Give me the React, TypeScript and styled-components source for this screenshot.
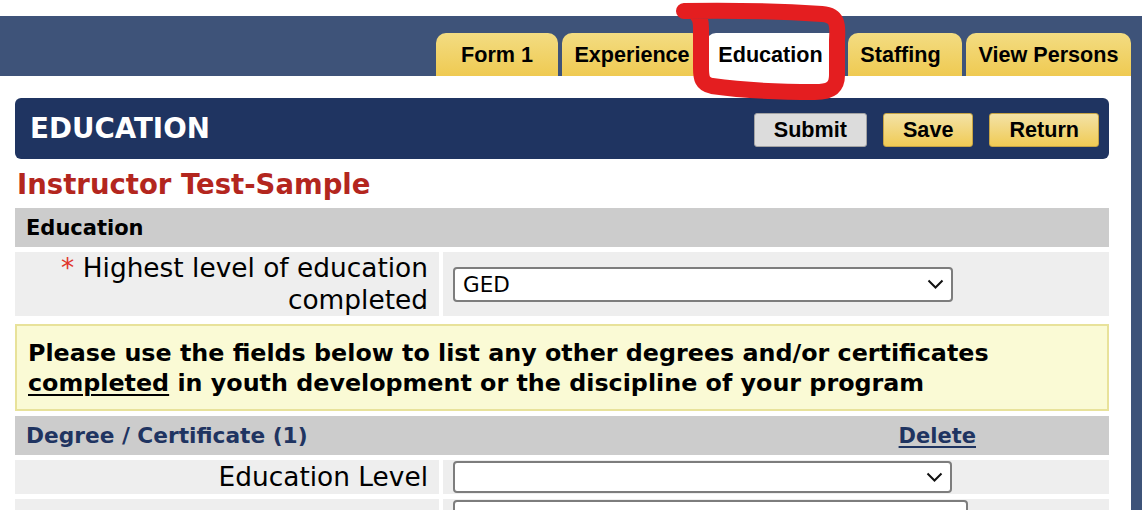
import React from "react";
import styled, { createGlobalStyle } from "styled-components";

const GlobalStyle = createGlobalStyle`
  html, body { margin: 0; padding: 0; background: #ffffff; }
  body {
    width: 1142px;
    height: 510px;
    overflow: hidden;
    font-family: "DejaVu Sans", Verdana, sans-serif;
  }
`;

const Page = styled.div`
  position: relative;
  width: 1142px;
  height: 510px;
  box-sizing: border-box;
  padding-top: 16px;
  display: flex;
  flex-direction: column;
  overflow: hidden;
`;

const TopBar = styled.nav`
  flex-shrink: 0;
  height: 60px;
  background: #3e5379;
  display: flex;
  justify-content: flex-end;
  align-items: flex-end;
  gap: 4px;
  padding-right: 11px;
`;

const Tab = styled.div<{ $w: number; $active?: boolean; $shift?: number }>`
  width: ${(p) => p.$w}px;
  height: 43px;
  box-sizing: border-box;
  padding-right: ${(p) => p.$shift ?? 0}px;
  border-radius: 10px 10px 0 0;
  background: ${(p) =>
    p.$active ? "#ffffff" : "linear-gradient(#f3dc82, #efca52)"};
  display: flex;
  align-items: center;
  justify-content: center;
  font: bold 21.6px "Liberation Sans", Arial, sans-serif;
  color: #000;
  white-space: nowrap;
`;

const Body = styled.div`
  flex: 1;
  min-height: 0;
  display: flex;
`;

const Main = styled.main`
  flex: 1;
  min-width: 0;
  background: #ffffff;
  padding: 22px 22px 0 15px;
  overflow: hidden;
`;

const RightRail = styled.div`
  width: 11px;
  flex-shrink: 0;
  background: #3e5379;
`;

const TitleBar = styled.header`
  height: 61px;
  box-sizing: border-box;
  background: #1f3461;
  border-radius: 6px;
  display: flex;
  align-items: center;
  justify-content: space-between;
  padding: 0 10px 0 15px;
`;

const PageTitle = styled.h1`
  margin: 0;
  color: #ffffff;
  font: bold 27.7px "DejaVu Sans", Verdana, sans-serif;
  line-height: 34px;
`;

const Buttons = styled.div`
  display: flex;
  gap: 16px;
  margin-top: 3px;
`;

const Button = styled.button<{ $gold?: boolean }>`
  height: 34px;
  box-sizing: border-box;
  padding: 0 19px;
  border-radius: 3px;
  border: 1.5px solid ${(p) => (p.$gold ? "#c6a445" : "#a3a3a3")};
  background: ${(p) =>
    p.$gold ? "linear-gradient(#f3e2a6, #f0cb55)" : "#dcdcdc"};
  font: bold 21.6px "Liberation Sans", Arial, sans-serif;
  color: #000;
  cursor: pointer;
`;

const Person = styled.h2`
  margin: 8px 0 7px 2px;
  color: #b3261e;
  font: bold 27.5px "DejaVu Sans", Verdana, sans-serif;
  line-height: 34px;
`;

const FormGrid = styled.div`
  display: grid;
  grid-template-columns: 424px 1fr;
  column-gap: 4px;
  row-gap: 5px;
`;

const SectionHeader = styled.div<{ $h: number; $navy?: boolean }>`
  grid-column: 1 / -1;
  height: ${(p) => p.$h}px;
  box-sizing: border-box;
  background: #cccccc;
  display: flex;
  align-items: center;
  justify-content: space-between;
  padding: 0 133px 0 11px;
  font: bold ${(p) => (p.$navy ? 21.7 : 21)}px "DejaVu Sans", Verdana, sans-serif;
  color: ${(p) => (p.$navy ? "#1f3461" : "#000")};
`;

const DeleteLink = styled.a`
  color: #1f3461;
  font-size: 21px;
  text-decoration: underline;
  text-underline-offset: 3px;
  text-decoration-thickness: 2px;
  cursor: pointer;
`;

const LabelCell = styled.div<{ $h: number }>`
  height: ${(p) => p.$h}px;
  box-sizing: border-box;
  background: #eeeeee;
  display: flex;
  align-items: center;
  justify-content: flex-end;
  text-align: right;
  padding: 0 11px 0 20px;
  font: 26.4px "DejaVu Sans", Verdana, sans-serif;
  line-height: 32px;
  color: #000;
  overflow: hidden;
`;

const Req = styled.span`
  color: #e0352b;
`;

const ValueCell = styled.div<{ $h: number }>`
  height: ${(p) => p.$h}px;
  box-sizing: border-box;
  background: #eeeeee;
  display: flex;
  align-items: center;
  padding-left: 10px;
`;

const SelectWrap = styled.div<{ $w: number; $h: number }>`
  position: relative;
  width: ${(p) => p.$w}px;
  height: ${(p) => p.$h}px;
`;

const Select = styled.select`
  appearance: none;
  -webkit-appearance: none;
  width: 100%;
  height: 100%;
  box-sizing: border-box;
  border: 2px solid #7d7d7d;
  border-radius: 4px;
  background: #ffffff;
  padding: 0 30px 0 8px;
  font: 21.5px "DejaVu Sans", Verdana, sans-serif;
  color: #000;
  outline: none;
`;

const Chevron = styled.svg`
  position: absolute;
  right: 9px;
  top: 50%;
  margin-top: -5px;
  pointer-events: none;
`;

const TextInput = styled.input<{ $w: number }>`
  width: ${(p) => p.$w}px;
  height: 34px;
  box-sizing: border-box;
  border: 2px solid #7d7d7d;
  border-radius: 4px;
  background: #fff;
  align-self: flex-start;
  margin-top: 1px;
  font: 21.5px "DejaVu Sans", Verdana, sans-serif;
`;

const Note = styled.div`
  grid-column: 1 / -1;
  margin-top: 3px;
  height: 87px;
  box-sizing: border-box;
  border: 2px solid #e8e29a;
  background: #fafad5;
  display: flex;
  align-items: center;
  padding: 0 11px;
  font: bold 23.8px "DejaVu Sans", Verdana, sans-serif;
  line-height: 30px;
  color: #000;
`;

const Underlined = styled.span`
  text-decoration: underline;
  text-underline-offset: 3px;
  text-decoration-thickness: 2px;
`;

const Annotation = styled.svg`
  position: absolute;
  left: 0;
  top: 0;
  pointer-events: none;
`;

type Opt = { w: number; h: number; value: string; options: string[] };

const Dropdown: React.FC<Opt> = ({ w, h, value, options }) => (
  <SelectWrap $w={w} $h={h}>
    <Select value={value} onChange={() => {}}>
      {options.map((o) => (
        <option key={o} value={o}>
          {o}
        </option>
      ))}
    </Select>
    <Chevron width="17" height="10" viewBox="0 0 17 10">
      <path d="M1.5 1.5 L8.5 8.5 L15.5 1.5" fill="none" stroke="#111" strokeWidth="2" />
    </Chevron>
  </SelectWrap>
);

const tabs = [
  { label: "Form 1", w: 122 },
  { label: "Experience", w: 140 },
  { label: "Education", w: 138, active: true, shift: 9 },
  { label: "Staffing", w: 114, shift: 9 },
  { label: "View Persons", w: 165 },
];

const levels = ["", "GED", "High School Diploma", "Associate Degree", "Bachelor's Degree", "Master's Degree", "Doctorate"];

export default function App() {
  return (
    <>
      <GlobalStyle />
      <Page>
        <TopBar>
          {tabs.map((t) => (
            <Tab key={t.label} $w={t.w} $active={t.active} $shift={t.shift}>
              {t.label}
            </Tab>
          ))}
        </TopBar>
        <Body>
          <Main>
            <TitleBar>
              <PageTitle>EDUCATION</PageTitle>
              <Buttons>
                <Button>Submit</Button>
                <Button $gold>Save</Button>
                <Button $gold>Return</Button>
              </Buttons>
            </TitleBar>
            <Person>Instructor Test-Sample</Person>
            <FormGrid>
              <SectionHeader $h={39}>Education</SectionHeader>
              <LabelCell $h={64}>
                <span>
                  <Req>*</Req> Highest level of education completed
                </span>
              </LabelCell>
              <ValueCell $h={64}>
                <Dropdown w={500} h={35} value="GED" options={levels} />
              </ValueCell>
              <Note>
                <span>
                  Please use the fields below to list any other degrees and/or certificates{" "}
                  <Underlined>completed</Underlined> in youth development or the discipline of
                  your program
                </span>
              </Note>
              <SectionHeader $h={39} $navy>
                <span>Degree / Certificate (1)</span>
                <DeleteLink>Delete</DeleteLink>
              </SectionHeader>
              <LabelCell $h={34}>Education Level</LabelCell>
              <ValueCell $h={34}>
                <Dropdown w={499} h={32} value="" options={levels} />
              </ValueCell>
              <LabelCell $h={44}>
                <span>
                  <Req>*</Req> Institution Name
                </span>
              </LabelCell>
              <ValueCell $h={44}>
                <TextInput $w={515} type="text" />
              </ValueCell>
            </FormGrid>
          </Main>
          <RightRail />
        </Body>
        <Annotation width="1142" height="510" viewBox="0 0 1142 510">
          <path
            d="M684 11 C730 10 790 12 822 14 C838 15 838 25 837 40 L837 75 C837 88 830 92 815 92 C780 92 740 90 712 86 C702 84 701 78 701 68 L701 28 C701 22 700 18 698 16"
            fill="none"
            stroke="#e41e20"
            strokeWidth="16"
            strokeLinecap="round"
            strokeLinejoin="round"
          />
        </Annotation>
      </Page>
    </>
  );
}
